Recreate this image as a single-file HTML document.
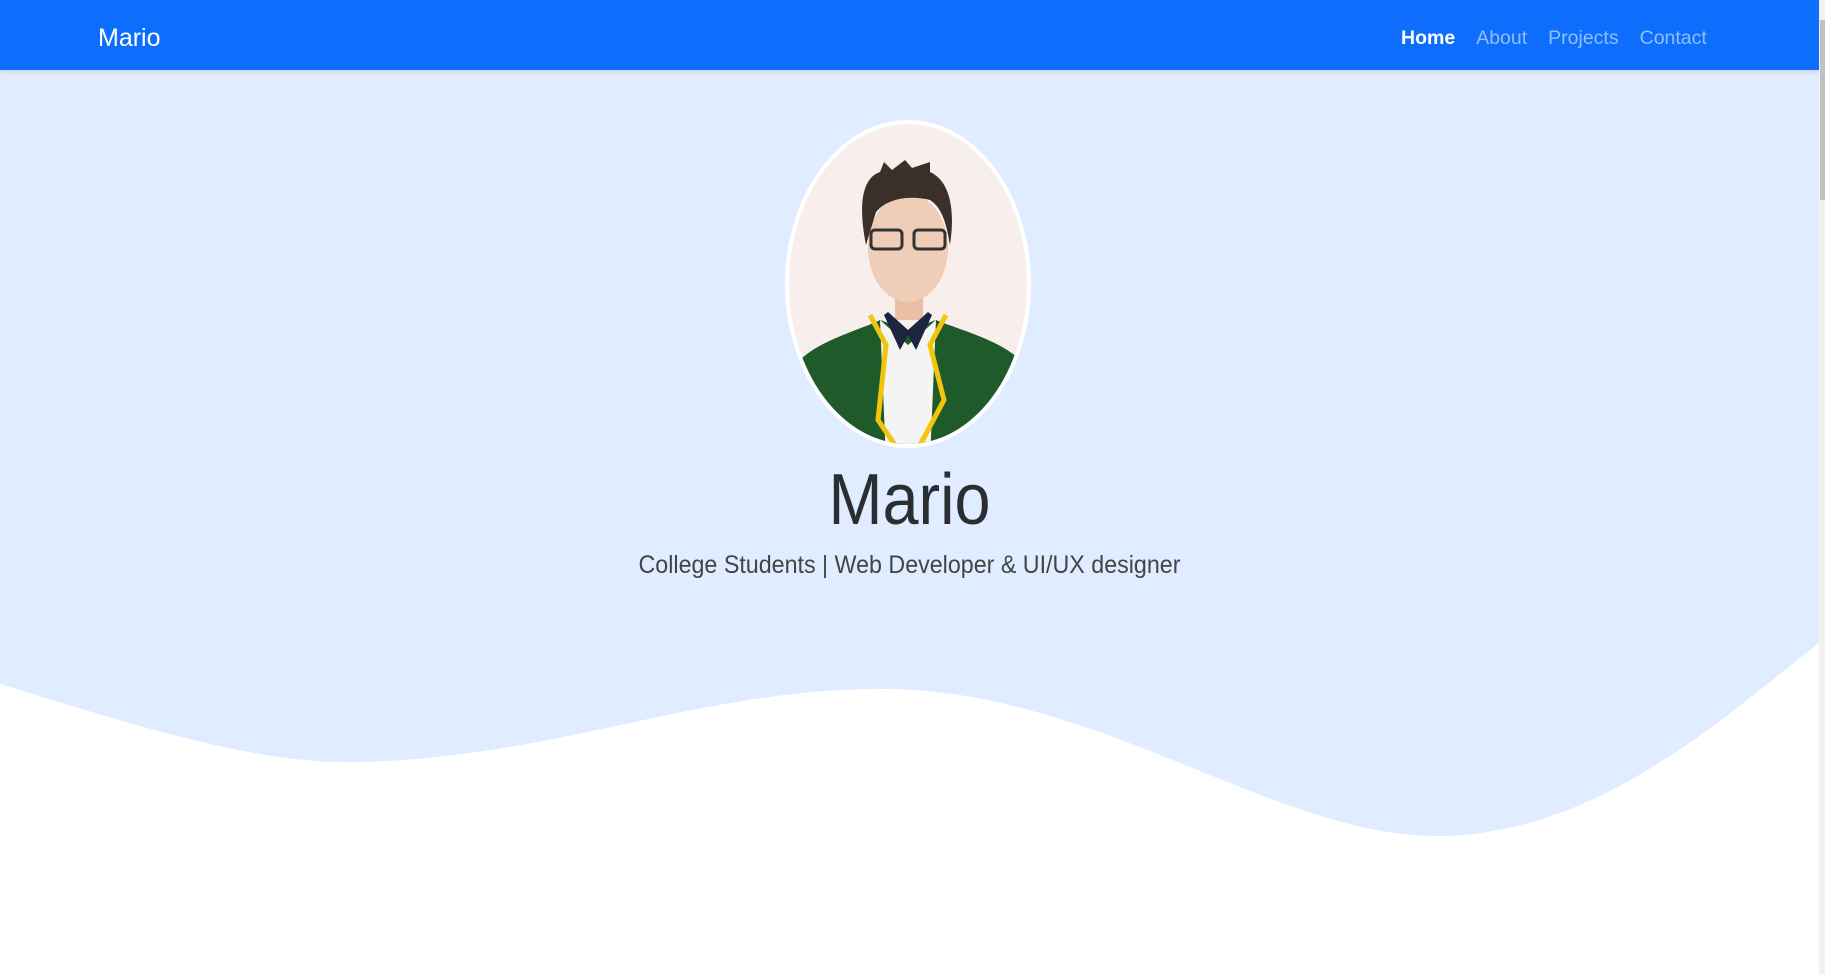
<!DOCTYPE html>
<html><head><meta charset="utf-8"><style>
html,body{margin:0;padding:0;width:1825px;height:974px;overflow:hidden;font-family:"Liberation Sans",sans-serif;}
.bg{position:absolute;left:0;top:0}
nav{position:absolute;left:0;top:0;width:1819px;height:70px;background:#0d6efd;box-shadow:0 2px 4px rgba(0,0,0,.1)}
.brand{position:absolute;left:98px;top:24px;color:#fff;font-size:25px}
.links{position:absolute;left:1401px;top:27px;font-size:19.5px;color:rgba(255,255,255,.55);white-space:nowrap}
.links span{margin-right:21px}
.links .a{color:#fff;font-weight:bold}
h1{position:absolute;left:0;width:1819px;top:459px;margin:0;text-align:center;font-weight:normal;font-size:72px;color:#2a2e33;transform:scaleX(0.9)}
p{position:absolute;left:0;width:1819px;top:551px;margin:0;text-align:center;font-weight:normal;font-size:25px;color:#444;transform:scaleX(0.93)}
.sb{position:absolute;left:1819px;top:0;width:6px;height:974px;background:#f1f1f1}
.sb div{position:absolute;left:1px;top:20px;width:5px;height:180px;background:#c1c1c1}
</style></head><body>
<svg class="bg" width="1825" height="974" viewBox="0 0 1825 974">
<rect width="1825" height="974" fill="#e0ecff"/>
<path d="M0,684 C150,730 260,765 361,762 C560,757 700,688 885,689 C1100,690 1280,840 1443,836 C1600,832 1720,720 1819,643 L1819,974 L0,974 Z" fill="#fff"/>
<defs><clipPath id="c"><ellipse cx="908" cy="284" rx="119" ry="160"/></clipPath></defs>
<ellipse cx="908" cy="284" rx="123" ry="164" fill="#fff"/>
<g clip-path="url(#c)">
<rect x="780" y="115" width="260" height="340" fill="#f8efed"/>
<rect x="895" y="290" width="28" height="30" fill="#e9bfa5"/>
<ellipse cx="908" cy="248" rx="40" ry="54" fill="#f0cdb6"/>
<path d="M866,245 C858,205 862,178 880,172 L884,162 L892,170 L905,160 L912,168 L930,162 L930,172 C948,180 956,205 950,245 C946,222 942,208 930,200 C910,195 888,198 876,212 Z" fill="#3b2f2a"/>
<rect x="871" y="230" width="31" height="19" rx="4" fill="none" stroke="#333" stroke-width="3"/>
<rect x="914" y="230" width="31" height="19" rx="4" fill="none" stroke="#333" stroke-width="3"/>
<path d="M800,360 C820,340 860,330 880,320 L908,330 L936,320 C960,330 1000,340 1020,360 L1030,460 L790,460 Z" fill="#1f5a2a"/>
<path d="M880,320 L908,345 L936,320 L930,460 L886,460 Z" fill="#f4f4f2"/>
<path d="M870,315 L886,345 L878,420 L905,460 M946,315 L930,345 L944,400 L912,460" fill="none" stroke="#f2c40d" stroke-width="5"/>
<path d="M884,315 L900,350 L908,335 L916,350 L932,315 L928,312 L908,330 L888,312 Z" fill="#1d2440"/>
</g>
</svg>
<nav><div class="brand">Mario</div><div class="links"><span class="a">Home</span><span>About</span><span>Projects</span><span>Contact</span></div></nav>
<h1>Mario</h1>
<p>College Students | Web Developer &amp; UI/UX designer</p>
<div class="sb"><div></div></div>
</body></html>
